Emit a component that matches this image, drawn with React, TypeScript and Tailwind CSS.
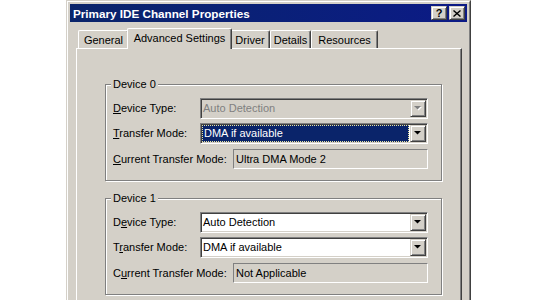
import React from 'react';

const raised =
  'border border-t-[#d4d0c8] border-l-[#d4d0c8] border-b-[#404040] border-r-[#404040] shadow-[inset_1px_1px_0_#fff,inset_-1px_-1px_0_#808080] bg-[#d4d0c8]';

function Arrow({ disabled }: { disabled?: boolean }) {
  return (
    <svg width="8" height="5" viewBox="0 0 8 5">
      {disabled && <polygon points="1,1 8,1 4.5,4.5" fill="#fff" />}
      <polygon points="0,0 7,0 3.5,3.5" fill={disabled ? '#808080' : '#000'} />
    </svg>
  );
}

function Combo({
  value,
  disabled,
  focused,
}: {
  value: string;
  disabled?: boolean;
  focused?: boolean;
}) {
  return (
    <div
      className={`flex w-[228px] h-[21px] p-[1px] border border-t-[#808080] border-l-[#808080] border-b-white border-r-white shadow-[inset_1px_1px_0_#404040,inset_-1px_-1px_0_#d4d0c8] ${
        disabled ? 'bg-[#d4d0c8]' : 'bg-white'
      }`}
    >
      <div className="flex-1 flex items-center min-w-0">
        {focused ? (
          <div className="h-full w-full mr-[1px] flex items-center pl-[1px] bg-[#0a246a] text-white border border-dotted border-[#e8e4a0]">
            {value}
          </div>
        ) : (
          <span className={`pl-[1px] ${disabled ? 'text-[#808080]' : 'text-black'}`}>{value}</span>
        )}
      </div>
      <div className={`w-[16px] h-[17px] flex items-center justify-center ${raised}`}>
        <Arrow disabled={disabled} />
      </div>
    </div>
  );
}

function Field({ value }: { value: string }) {
  return (
    <div className="w-[195px] h-[20px] flex items-center pl-[2px] border border-t-[#808080] border-l-[#808080] border-b-white border-r-white">
      {value}
    </div>
  );
}

function Group({
  title,
  type,
  typeLabel,
  modeLabel,
  currentLabel,
  current,
  typeDisabled,
  modeFocused,
}: {
  title: string;
  type: string;
  typeLabel: React.ReactNode;
  modeLabel: React.ReactNode;
  currentLabel: React.ReactNode;
  current: string;
  typeDisabled?: boolean;
  modeFocused?: boolean;
}) {
  return (
    <div className="relative w-[337px] border border-[#808080] shadow-[inset_1px_1px_0_#fff,1px_1px_0_#fff] pt-[13px] pb-[11px] pl-[7px]">
      {/* group caption sits on top of the etched line */}
      <span className="absolute left-[5px] -top-[7px] px-[2px] bg-[#d4d0c8] leading-[13px]">{title}</span>
      <div className="flex flex-col">
        <div className="flex items-center">
          <span className="w-[87px]">{typeLabel}</span>
          <Combo value={type} disabled={typeDisabled} />
        </div>
        <div className="flex items-center mt-[4px]">
          <span className="w-[87px]">{modeLabel}</span>
          <Combo value="DMA if available" focused={modeFocused} />
        </div>
        <div className="flex items-center mt-[5px]">
          <span className="w-[120px]">{currentLabel}</span>
          <Field value={current} />
        </div>
      </div>
    </div>
  );
}

const tabs = [
  { name: 'General', w: 'w-[51px]' },
  { name: 'Advanced Settings', w: 'w-[105px]', active: true },
  { name: 'Driver', w: 'w-[40px]' },
  { name: 'Details', w: 'w-[41px]' },
  { name: 'Resources', w: 'w-[67px]' },
];

export default function App() {
  return (
    <div className="w-[540px] h-[300px] bg-white overflow-hidden font-['Liberation_Sans',Arial,sans-serif] text-[11px] text-black">
      <div className="ml-[66px] w-[405px] h-[310px] bg-[#d4d0c8] border border-t-[#d4d0c8] border-l-[#d4d0c8] border-b-[#404040] border-r-[#404040]">
        <div className="h-full border border-t-white border-l-white border-b-[#808080] border-r-[#808080] p-[2px]">
          {/* Title bar */}
          <div className="h-[18px] flex items-center justify-between pl-[3px] pr-[2px] bg-gradient-to-r from-[#0a246a] to-[#0c1a86]">
            <span className="text-white font-bold text-[11.7px] pt-[1px]">Primary IDE Channel Properties</span>
            <div className="flex gap-[2px]">
              <div className={`w-[16px] h-[14px] flex items-center justify-center font-bold text-[11px] leading-none ${raised}`}>
                ?
              </div>
              <div className={`w-[16px] h-[14px] flex items-center justify-center ${raised}`}>
                <svg width="8" height="7" viewBox="0 0 8 7">
                  <path d="M0.5 0.5 L7.5 6.5 M7.5 0.5 L0.5 6.5" stroke="#000" strokeWidth="1.4" />
                </svg>
              </div>
            </div>
          </div>

          <div className="pt-[6px] pl-[6px] pr-[5px]">
            {/* Tabs */}
            <div className="flex items-end h-[20px] pl-[2px]">
              {tabs.map((t) =>
                t.active ? (
                  <div
                    key={t.name}
                    className={`${t.w} h-[21px] -mx-[2px] -mb-[1px] relative z-10 bg-[#d4d0c8] flex items-center justify-center pb-[2px] border-t border-l border-t-white border-l-white border-r border-r-[#404040] shadow-[inset_-1px_0_0_#808080] rounded-t-[2px]`}
                  >
                    {t.name}
                  </div>
                ) : (
                  <div
                    key={t.name}
                    className={`${t.w} h-[18px] flex items-center justify-center pt-[1px] border-t border-l border-t-white border-l-white border-r border-r-[#404040] shadow-[inset_-1px_0_0_#808080] rounded-t-[2px]`}
                  >
                    {t.name}
                  </div>
                )
              )}
            </div>

            {/* Tab panel */}
            <div className="h-[260px] border-t border-l border-t-white border-l-white border-r border-r-[#404040] shadow-[inset_-1px_0_0_#808080] pl-[28px] pt-[35px]">
              <Group
                title="Device 0"
                typeLabel={<><u>D</u>evice Type:</>}
                modeLabel={<><u>T</u>ransfer Mode:</>}
                currentLabel={<><u>C</u>urrent Transfer Mode:</>}
                type="Auto Detection"
                typeDisabled
                modeFocused
                current="Ultra DMA Mode 2"
              />
              <div className="h-[17px]" />
              <Group
                title="Device 1"
                typeLabel={<>D<u>e</u>vice Type:</>}
                modeLabel={<>T<u>r</u>ansfer Mode:</>}
                currentLabel={<>C<u>u</u>rrent Transfer Mode:</>}
                type="Auto Detection"
                current="Not Applicable"
              />
            </div>
          </div>
        </div>
      </div>
    </div>
  );
}
